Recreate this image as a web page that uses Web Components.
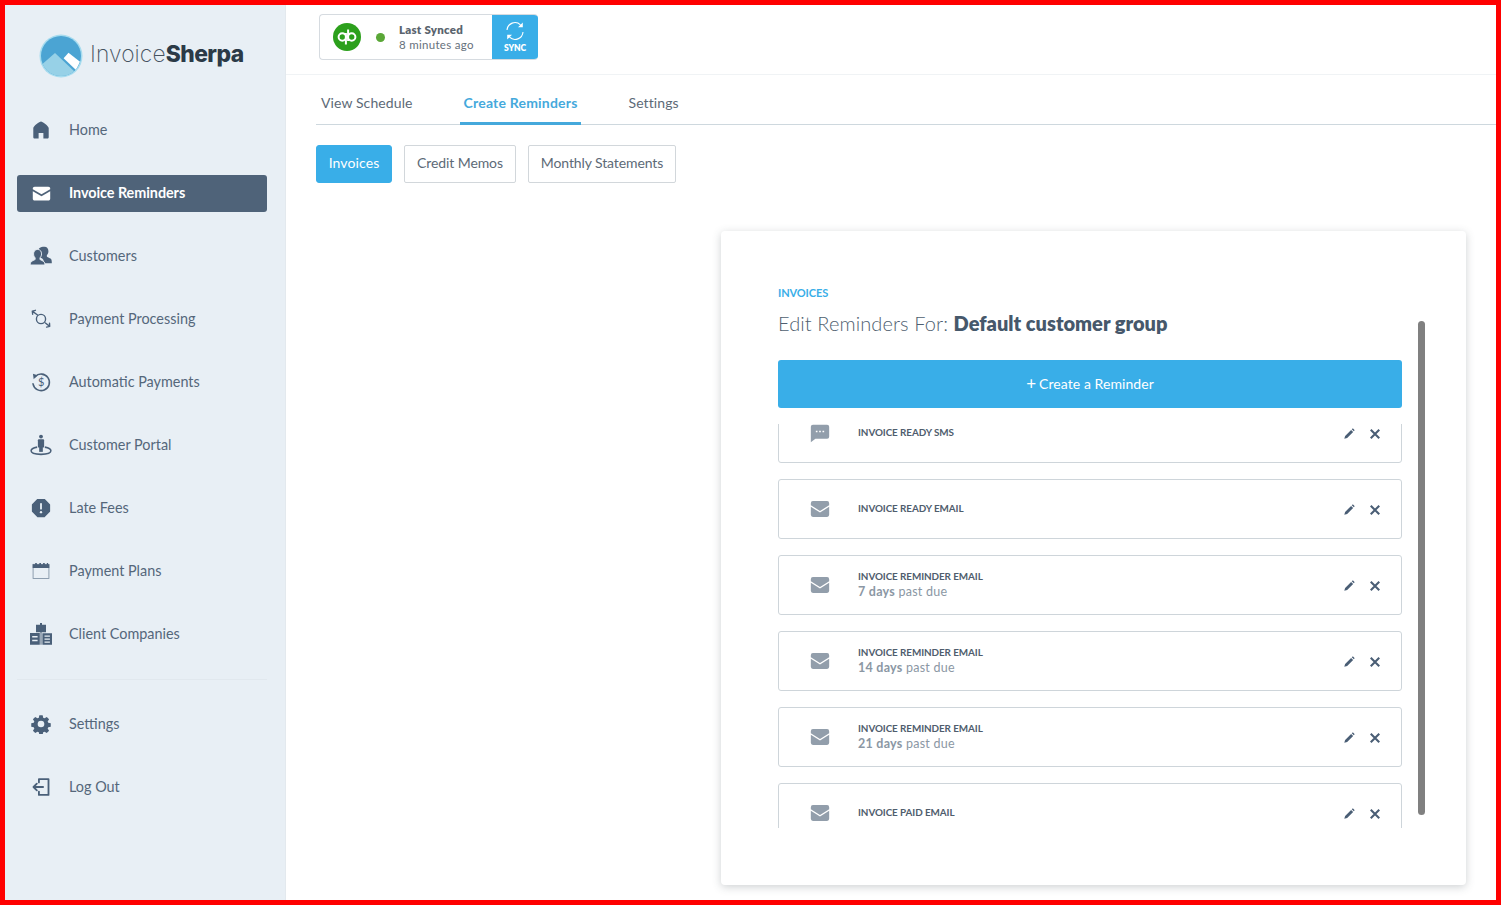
<!DOCTYPE html>
<html lang="en"><head><meta charset="utf-8"><title>InvoiceSherpa</title>
<style>
html,body{margin:0;padding:0;height:100%;background:#fff;font-family:Lato,"Open Sans",sans-serif;}
</style></head><body>
<app-frame>
  <side-bar slot="side"></side-bar>
  <top-bar slot="main"></top-bar>
  <main-tabs slot="main"></main-tabs>
  <sub-buttons slot="main"></sub-buttons>
  <reminder-card slot="main"></reminder-card>
</app-frame>
<script>
const ICONS={
home:'<path fill="currentColor" d="M12 2.600C10.600 2.600 3.600 7.400 3.600 9.800V20c0 .8.6 1.400 1.400 1.400h4.400v-6.200h5.200v6.200H19c.8 0 1.400-.6 1.400-1.400V9.800C20.400 7.400 13.400 2.600 12 2.600z"/>',
mail:'<path fill="currentColor" d="M3.400 3.500h17.200C22 3.500 23 4.500 23 5.800v.9l-11 6.300L1 6.700v-.9C1 4.500 2 3.500 3.400 3.500z"/><path fill="currentColor" d="M1 9.200l11 6.300 11-6.300v9.300c0 1.300-1 2.300-2.400 2.300H3.400C2 20.800 1 19.800 1 18.500z"/>',
customers:'<path fill="currentColor" d="M15.800 1.800c2.700 0 4.300 2.100 4.300 4.900 0 1.900-.7 3.300-1.700 4.300v1.500c0 1 3.200 1.400 4.400 2.600.8.800 1 2.500 1 4.900h-8.500c0-3-1-5-3.600-6l-1.300-.5v-2.500c-1-1-1.600-2.500-1.600-4.300 0-2.900 2.100-4.900 7-4.900z"/><path fill="currentColor" stroke="#e8eff5" stroke-width="1" d="M8.300 4.800c2.700 0 4.300 2.100 4.300 4.900 0 1.900-.7 3.300-1.700 4.300v1.600c0 1 3 1.400 4.300 2.600.9.800 1.100 2 1.100 3.600H.2c0-1.600.2-2.800 1.100-3.600 1.300-1.200 4.300-1.600 4.300-2.600V14c-1-1-1.700-2.400-1.700-4.300 0-2.800 1.700-4.900 4.400-4.900z"/>',
process:'<g fill="none" stroke="currentColor" stroke-width="1.500" stroke-linecap="round" stroke-linejoin="round"><circle cx="12" cy="12" r="5"/><path d="M8.200 7.600 2.500 3.400M2.500 3.400l3.400-.9M2.500 3.400l.4 3.400"/><path d="M16.800 16.400 21.500 20M21.500 20l-3.400 .9M21.500 20l-.2-3.400"/></g>',
auto:'<path fill="none" stroke="currentColor" stroke-width="1.700" stroke-linecap="round" d="M5.600 6.200A9 9 0 1 1 3.300 14"/><path fill="currentColor" d="M3.200 2.900 8.300 4.500 4 9z"/><text x="12.300" y="16.600" text-anchor="middle" font-family="Lato,sans-serif" font-size="12" fill="currentColor">$</text>',
portal:'<circle cx="12" cy="2.800" r="2.100" fill="currentColor"/><rect x="8.600" y="5.800" width="6.800" height="9" rx="1" fill="currentColor"/><rect x="10" y="14" width="4" height="5.500" fill="currentColor"/><path fill="none" stroke="currentColor" stroke-width="1.700" d="M7.800 14.300C3.600 15 1.200 16.500 1.200 18.400c0 2.300 4.800 3.800 10.800 3.800s10.800-1.500 10.800-3.800c0-1.900-2.400-3.400-6.600-4.100"/>',
alert:'<path fill="currentColor" d="M8 1.800h8L22.200 8v8L16 22.200H8L1.800 16V8z" stroke="currentColor" stroke-width="1.500" stroke-linejoin="round"/><rect x="10.900" y="6" width="2.200" height="8" rx="1" fill="#e8eff5"/><circle cx="12" cy="17" r="1.400" fill="#e8eff5"/>',
calendar:'<rect x="2.500" y="4" width="19" height="17" fill="none" stroke="#7d8fa2" stroke-width="1"/><path fill="currentColor" d="M2 4h3V2.500h2V4h3V2.500h2V4h2.500V2.500h2V4H19V2.500h1.500V4H22v4.500H2z"/>',
building:'<path fill="currentColor" d="M7 2.800h4V.9h2v1.900h4v7.500h-4.500v12.400h-1V10.300H7z"/><path fill="currentColor" fill-rule="evenodd" d="M1 11h9.800v11.700H1zM3.200 14v1.400h5.400V14zm0 3.800v1.400h5.400v-1.400z"/><path fill="currentColor" fill-rule="evenodd" d="M13.400 11.300H23v11.400h-9.600zM15.500 13.500v1.300h5.400v-1.300zm0 3v1.300h5.400v-1.300zm0 3v1.300h5.400v-1.300z"/>',
gear:'<path fill="currentColor" fill-rule="evenodd" d="M10 1.500h4l.6 3 1.700.7 2.600-1.700 2.800 2.800-1.700 2.600.7 1.700 3 .6v4l-3 .6-.7 1.700 1.700 2.600-2.800 2.800-2.600-1.700-1.700.7-.6 3h-4l-.6-3-1.700-.7-2.600 1.700-2.800-2.800 1.700-2.600-.7-1.700-3-.6v-4l3-.6.7-1.700L2.300 6.300l2.800-2.800 2.600 1.700 1.700-.7zM12 8a4 4 0 1 0 0 8 4 4 0 0 0 0-8z"/>',
logout:'<path fill="none" stroke="currentColor" stroke-width="2.200" stroke-linecap="round" stroke-linejoin="round" d="M9.500 6.500V2.500h11.500v19H9.500v-4"/><path fill="none" stroke="currentColor" stroke-width="2.200" stroke-linecap="round" stroke-linejoin="round" d="M14.500 12H3.200M7 8l-4 4 4 4"/>',
pencil:'<path fill="currentColor" d="M16.200 3.800 20.300 7.900 8.300 19.900 2.600 21.500 4.200 15.800zM17.500 2.500l1-1c.6-.6 1.500-.6 2.100 0l2 2c.6.6.6 1.500 0 2.100l-1 1z"/>',
close:'<path fill="none" stroke="currentColor" stroke-width="4.200" d="M3.500 3.500l17 17M20.500 3.500l-17 17"/>',
chat:'<path fill="currentColor" fill-rule="evenodd" d="M3.500 2h17A2.500 2.500 0 0 1 23 4.500v12a2.500 2.500 0 0 1-2.500 2.500H6.500L1 23V4.500A2.500 2.500 0 0 1 3.500 2zM7 9.200v2h2v-2zm4 0v2h2v-2zm4 0v2h2v-2z"/>',
mailcard:'<path fill="currentColor" fill-rule="evenodd" d="M3.500 2.500h17A2.500 2.500 0 0 1 23 5v14a2.500 2.500 0 0 1-2.500 2.500h-17A2.500 2.500 0 0 1 1 19V5a2.500 2.500 0 0 1 2.500-2.500zM1 7.500l11 6.800 11-6.800v1.900l-11 6.800L1 9.400z"/>'
};

class XIcon extends HTMLElement{
  connectedCallback(){
    const s=this.getAttribute('size')||18,n=this.getAttribute('name');
    this.attachShadow({mode:'open'}).innerHTML=`<style>:host{display:inline-flex;align-items:center;justify-content:center;flex:none;line-height:0}</style><svg width="${s}" height="${s}" viewBox="0 0 24 24" aria-hidden="true">${ICONS[n]||''}</svg>`;
  }
}
customElements.define('x-icon',XIcon);

class AppFrame extends HTMLElement{
  constructor(){super();this.attachShadow({mode:'open'}).innerHTML=`<style>
  :host{display:grid;grid-template-columns:281px 1fr;box-sizing:border-box;height:905px;border:5px solid #f00;overflow:hidden;background:#fff}
  .side{display:block;min-height:0}
  .main{display:flex;flex-direction:column;min-width:0}
  </style><div class="side"><slot name="side"></slot></div><div class="main"><slot name="main"></slot></div>`;}
}
customElements.define('app-frame',AppFrame);

class NavItem extends HTMLElement{
  constructor(){super();this.attachShadow({mode:'open'}).innerHTML=`<style>
  :host{display:flex;align-items:center;height:37px;box-sizing:border-box;margin:0 18px 0 12px;padding-left:12px;border-radius:3px;color:#55677b;font:400 14.400px/1 Lato,sans-serif;letter-spacing:0}
  :host([active]){background:#4f6379;color:#fff;font-weight:700;letter-spacing:-.06px}
  .ic{width:24px;display:flex;justify-content:center;color:#4a6079}
  :host([active]) .ic{color:#fff}
  .t{margin-left:16px;white-space:nowrap;padding-top:1px}
  </style><span class="ic"></span><span class="t"><slot></slot></span>`;}
  connectedCallback(){const i=document.createElement('x-icon');i.setAttribute('name',this.getAttribute('icon'));i.setAttribute('size',this.getAttribute('size')||'22');this.shadowRoot.querySelector('.ic').append(i);}
}
customElements.define('nav-item',NavItem);

class SideBar extends HTMLElement{
  constructor(){super();this.attachShadow({mode:'open'}).innerHTML=`<style>
  :host{display:flex;flex-direction:column;height:895px;background:#e8eff5;border-right:1px solid #e3e9ee;box-sizing:border-box}
  .logo{display:flex;align-items:center;height:106.500px;padding-left:34px;gap:7px;box-sizing:border-box;padding-bottom:4px}
  .word{font:200 22.800px/1 Inter,sans-serif;color:#45525f;letter-spacing:.1px;white-space:nowrap;margin-top:-3px}
  .word b{font-weight:800;color:#2b3a47;letter-spacing:-.5px}
  nav{display:flex;flex-direction:column;gap:26px}
  hr{border:0;border-top:1px solid #e1e8ee;margin:26px 18px 26px 12px;height:0}
  </style>
  <div class="logo"><svg width="44" height="44" viewBox="0 0 44 44" aria-hidden="true"><defs><clipPath id="c"><circle cx="22" cy="22" r="20"/></clipPath></defs><circle cx="22" cy="22" r="21.500" fill="#a7dcef"/><g clip-path="url(#c)"><rect width="44" height="44" fill="#4ba4d3"/><path fill="#97d1e7" d="M0 33 16 19 36 38V44H0z"/><path fill="#fff" d="M29.500 18.700 41 27.700 37 36 24.600 24.300z"/></g></svg><span class="word">Invoice<b>Sherpa</b></span></div>
  <nav>
    <nav-item icon="home">Home</nav-item>
    <nav-item icon="mail" size="19" active>Invoice Reminders</nav-item>
    <nav-item icon="customers">Customers</nav-item>
    <nav-item icon="process">Payment Processing</nav-item>
    <nav-item icon="auto">Automatic Payments</nav-item>
    <nav-item icon="portal">Customer Portal</nav-item>
    <nav-item icon="alert" size="20">Late Fees</nav-item>
    <nav-item icon="calendar" size="20">Payment Plans</nav-item>
    <nav-item icon="building" size="24">Client Companies</nav-item>
  </nav>
  <hr>
  <nav>
    <nav-item icon="gear" size="20">Settings</nav-item>
    <nav-item icon="logout" size="20">Log Out</nav-item>
  </nav>`;}
}
customElements.define('side-bar',SideBar);

class TopBar extends HTMLElement{
  constructor(){super();this.attachShadow({mode:'open'}).innerHTML=`<style>
  :host{display:flex;align-items:flex-start;height:70px;box-sizing:border-box;padding:9px 0 0 33px;border-bottom:1px solid #f0f3f5;flex:none}
  .sync{display:flex;height:46px;width:219px;box-sizing:border-box;border:1px solid #d6dbe0;border-right:0;border-radius:4px;overflow:hidden}
  .l{flex:1;display:flex;align-items:center;padding-left:13px}
  .dot{width:9px;height:9px;border-radius:50%;background:#5aa737;margin-left:15px}
  .tx{margin-left:14px;font:400 11.500px/15px Lato,sans-serif;color:#66717c;letter-spacing:.3px}
  .tx b{display:block;font-weight:800;font-size:11.500px;color:#5a646e;letter-spacing:.25px}
  .btn{width:46px;background:#39aee8;color:#fff;display:flex;flex-direction:column;align-items:center;justify-content:center;margin:-1px 0}
  .btn span{font:800 8.500px/1 Lato,sans-serif;margin-top:3px;letter-spacing:-.1px}
  </style>
  <div class="sync"><div class="l">
  <svg width="28" height="28" viewBox="0 0 28 28" aria-hidden="true"><circle cx="14" cy="14" r="14" fill="#2ca01c"/><g fill="none" stroke="#fff" stroke-width="2"><circle cx="9.300" cy="14" r="3.700"/><path d="M12.900 10V21.500"/><circle cx="18.700" cy="14" r="3.700"/><path d="M15.100 18V6.500"/></g></svg>
  <span class="dot"></span><div class="tx"><b>Last Synced</b>8 minutes ago</div></div>
  <div class="btn"><svg width="20" height="20" viewBox="0 0 20 20" aria-hidden="true"><g fill="none" stroke="#fff" stroke-width="1.100"><path d="M2 9A8 8 0 0 1 15.500 3.800"/><path d="M18 11A8 8 0 0 1 4.500 16.200"/></g><path fill="#fff" d="M17.800 1.500v4.800H13zM2.200 18.500v-4.800H7z"/></svg><span>SYNC</span></div></div>`;}
}
customElements.define('top-bar',TopBar);

class MainTabs extends HTMLElement{
  constructor(){super();this.attachShadow({mode:'open'}).innerHTML=`<style>
  :host{display:flex;height:50px;box-sizing:border-box;margin-left:30px;border-bottom:1px solid #ced8de;flex:none;font:400 14px/1 Lato,sans-serif;color:#5d6a77}
  a{display:flex;align-items:center;box-sizing:border-box;height:50px;padding:9px 4px 3px;letter-spacing:.1px;white-space:nowrap;margin-right:43px}
  a.first{margin-left:1px}
  a.on{color:#45a9dc;font-weight:700;border-bottom:3px solid #45a9dc;padding-bottom:0;letter-spacing:.2px}
  </style><a class="first">View Schedule</a><a class="on">Create Reminders</a><a>Settings</a>`;}
}
customElements.define('main-tabs',MainTabs);

class SubButtons extends HTMLElement{
  constructor(){super();this.attachShadow({mode:'open'}).innerHTML=`<style>
  :host{display:flex;gap:12px;margin:20px 0 0 30px;flex:none;font:400 14px/1 Lato,sans-serif}
  a{display:flex;align-items:center;justify-content:center;height:38px;box-sizing:border-box;padding-bottom:2px;border:1px solid #d2d7db;border-radius:2px;color:#5d6a77;letter-spacing:-.1px;white-space:nowrap}
  a.on{background:#39aee8;border-color:#39aee8;color:#fff;border-radius:3px;letter-spacing:.1px}
  </style><a class="on" style="width:76px">Invoices</a><a style="width:112px">Credit Memos</a><a style="width:148px">Monthly Statements</a>`;}
}
customElements.define('sub-buttons',SubButtons);

class ReminderRow extends HTMLElement{
  constructor(){super();this.attachShadow({mode:'open'}).innerHTML=`<style>
  :host{display:flex;align-items:center;height:60px;box-sizing:border-box;border:1px solid #ced5da;border-radius:3px;background:#fff;flex:none}
  .ic{width:18px;margin-left:32px;color:#929eab;display:flex;justify-content:center}
  .tx{margin-left:29px;flex:1;min-width:0;padding-bottom:2px}
  .t{font:700 9.900px/15px Lato,sans-serif;color:#4f5d6d;text-transform:uppercase;letter-spacing:-.08px;white-space:nowrap}
  .s{font:400 12.500px/14px Lato,sans-serif;color:#8b97a4;letter-spacing:.25px;margin-top:1px}
  ::slotted(b){font-weight:700}
  .a{display:flex;align-items:center;gap:14px;margin-right:20px;color:#4a5e75;margin-top:2px}
  </style><span class="ic"></span><div class="tx"><div class="t"></div><div class="s"><slot></slot></div></div>
  <div class="a"><x-icon name="pencil" size="12"></x-icon><x-icon name="close" size="12"></x-icon></div>`;}
  connectedCallback(){
    const r=this.shadowRoot,i=document.createElement('x-icon');
    i.setAttribute('name',this.getAttribute('icon'));i.setAttribute('size','20');
    r.querySelector('.ic').append(i);
    r.querySelector('.t').textContent=this.getAttribute('label');
    if(!this.childNodes.length){r.querySelector('.s').style.display='none';r.querySelector('.tx').style.paddingBottom='1px';}
  }
}
customElements.define('reminder-row',ReminderRow);

class ReminderCard extends HTMLElement{
  constructor(){super();this.attachShadow({mode:'open'}).innerHTML=`<style>
  :host{display:block;position:relative;box-sizing:border-box;width:745px;height:654px;margin:48px 30px 0 auto;padding:55px 64px 0 57px;background:#fff;border-radius:4px;box-shadow:0 2px 8px rgba(60,70,80,.25);flex:none}
  .k{font:700 11px/14px Lato,sans-serif;color:#39aee8;letter-spacing:-.1px}
  h2{margin:11px 0 0;font:300 20px/24px Lato,sans-serif;color:#4f5f70;letter-spacing:.1px}
  h2 b{font-weight:800;color:#46586b;letter-spacing:0}
  .create{display:flex;align-items:center;justify-content:center;height:48px;margin-top:25px;background:#39aee8;color:#fff;border-radius:3px;font:400 14px/1 Lato,sans-serif;letter-spacing:.07px}
  .create span{font-size:17px;line-height:14px;margin-right:3px}
  .clip{height:404px;margin-top:16px;overflow:hidden}
  .list{display:flex;flex-direction:column;gap:16px;margin-top:-21px}
  .bar{position:absolute;left:697px;top:90px;width:7px;height:494px;background:#808080;border-radius:4px}
  </style>
  <div class="k">INVOICES</div>
  <h2>Edit Reminders For: <b>Default customer group</b></h2>
  <div class="create"><span>+</span>Create a Reminder</div>
  <div class="clip"><div class="list">
    <reminder-row icon="chat" label="Invoice Ready SMS"></reminder-row>
    <reminder-row icon="mailcard" label="Invoice Ready Email"></reminder-row>
    <reminder-row icon="mailcard" label="Invoice Reminder Email"><b>7 days</b> past due</reminder-row>
    <reminder-row icon="mailcard" label="Invoice Reminder Email"><b>14 days</b> past due</reminder-row>
    <reminder-row icon="mailcard" label="Invoice Reminder Email"><b>21 days</b> past due</reminder-row>
    <reminder-row icon="mailcard" label="Invoice Paid Email"></reminder-row>
  </div></div>
  <div class="bar"></div>`;}
}
customElements.define('reminder-card',ReminderCard);
</script>
</body></html>
